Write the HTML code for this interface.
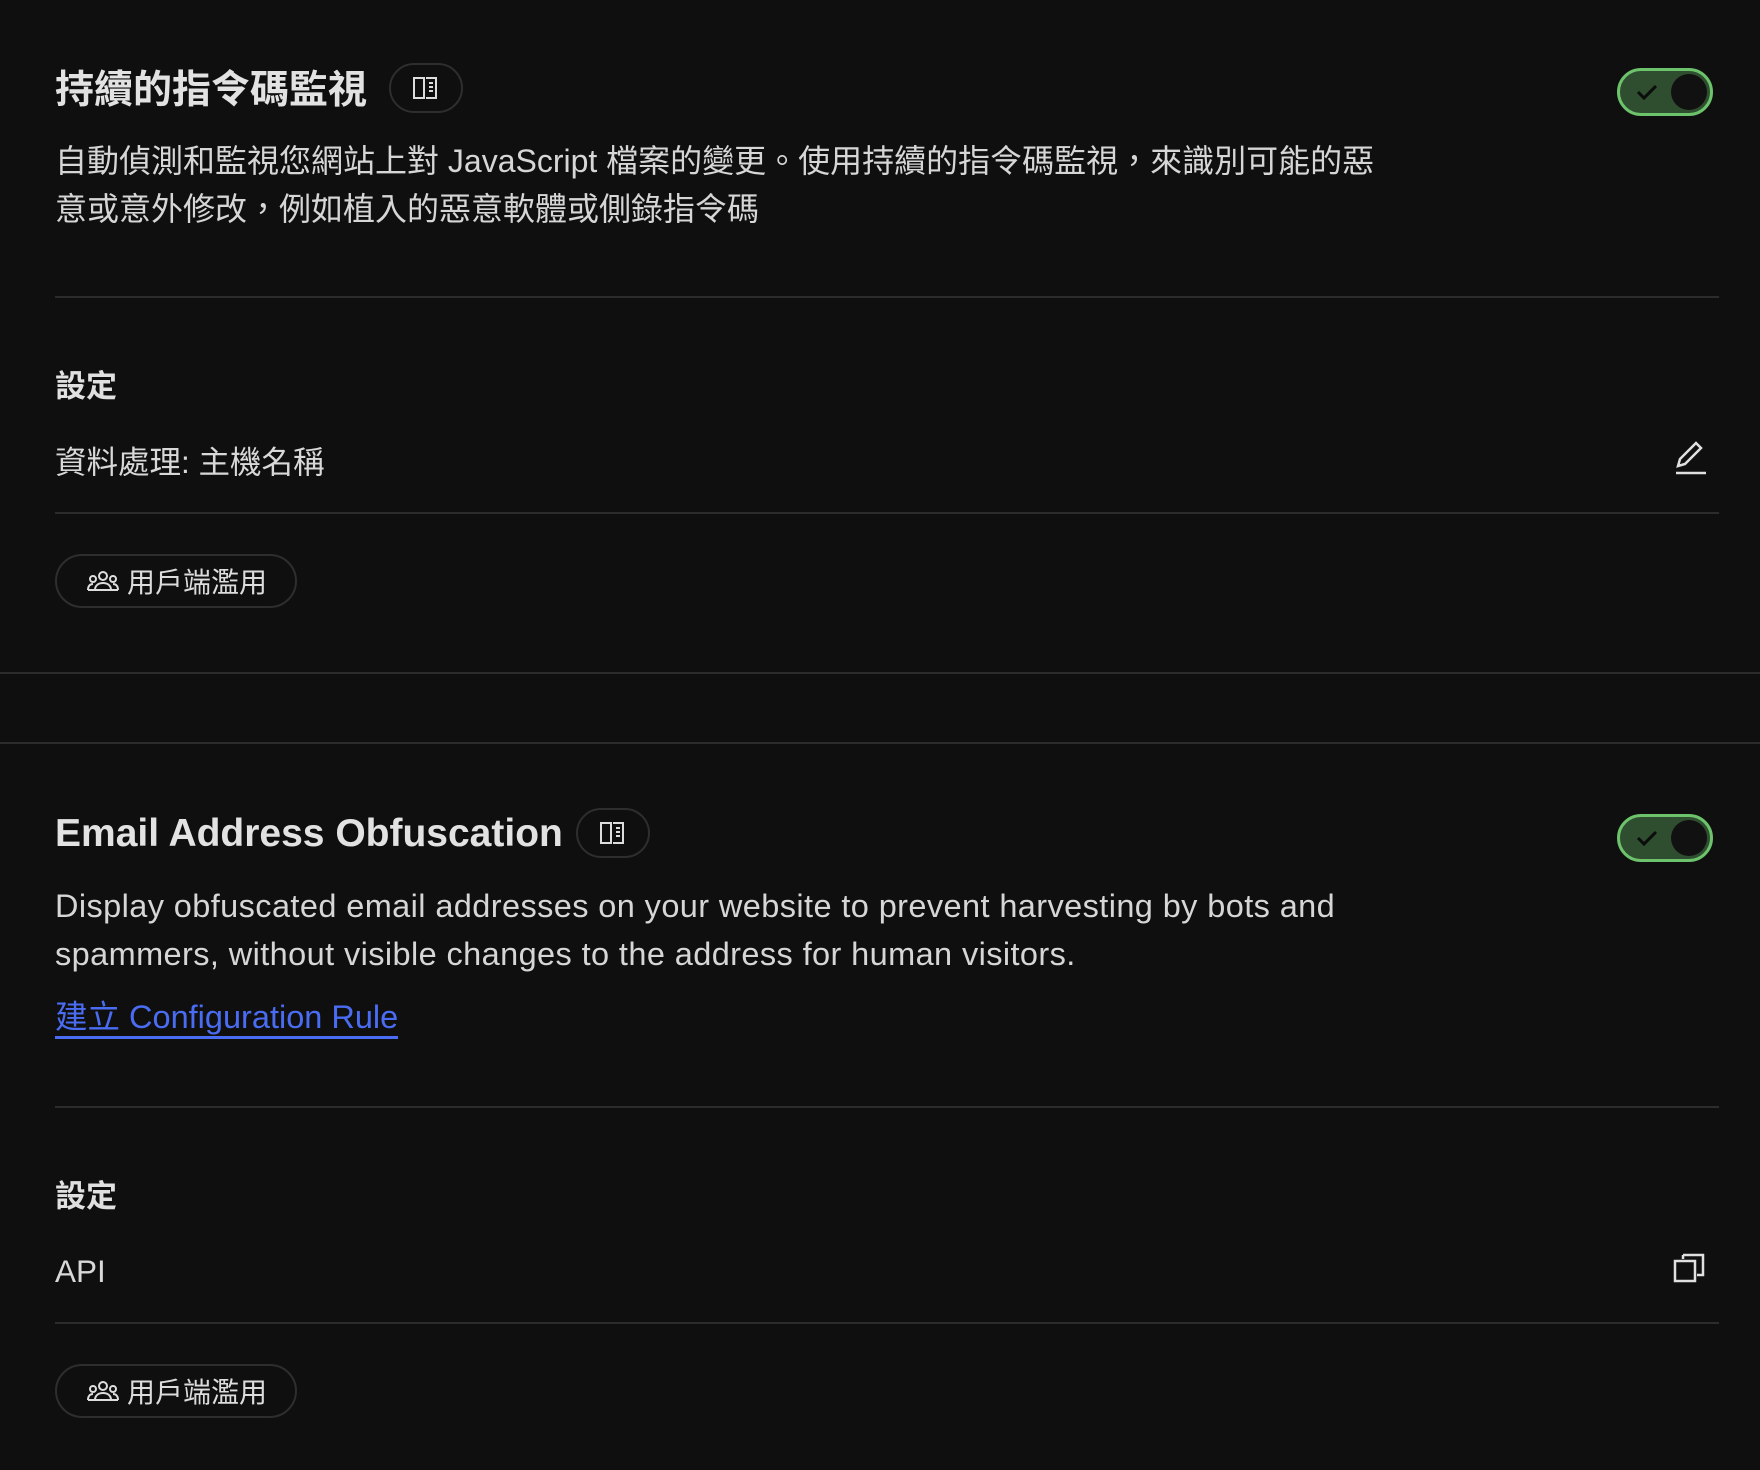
<!DOCTYPE html>
<html><head><meta charset="utf-8"><style>
*{margin:0;padding:0;box-sizing:border-box}
body{width:1760px;height:1470px;background:#0f0f0f;color:#dcdcdc;font-family:"Liberation Sans","Noto Sans CJK TC",sans-serif;position:relative;overflow:hidden}
.a{position:absolute;white-space:nowrap}
.t{font-size:39px;font-weight:bold;color:#e2e2e2}
.d{font-size:32px;line-height:48px;color:#d6d6d6}
.h{font-size:31px;font-weight:bold;color:#e0e0e0}
.r{font-size:31.5px;color:#d8d8d8}
.hr{position:absolute;height:2px;background:#2c2c2c}
.bk{position:absolute;width:74px;height:50px;border:2px solid #2e2e2e;border-radius:25px;display:flex;align-items:center;justify-content:center}
.tg{position:absolute;width:96px;height:48px;border-radius:24px;background:#2f4d2f;border:3px solid #6cc36c}
.tg .k{position:absolute;right:3px;top:3px;width:36px;height:36px;border-radius:50%;background:#111}
.tg svg{position:absolute;left:16px;top:12px}
.pill{position:absolute;width:242px;height:54px;border:2px solid #2e2e2e;border-radius:27px;display:flex;align-items:center;padding-left:30px;font-size:28px;color:#dcdcdc}
.pill svg{margin-right:8px}
</style></head><body>
<div class="a t" style="left:55px;top:59px">持續的指令碼監視</div>
<div class="bk" style="left:389px;top:63px"><svg width="28" height="26" viewBox="0 0 28 26" fill="none" stroke="#ddd" stroke-width="2"><path d="M2 3h10v20H2zM14 3h10v20H14"/><path d="M17 8h4M17 12h4M17 16h4"/></svg></div>
<div class="tg" style="left:1617px;top:68px"><svg width="22" height="18" viewBox="0 0 22 18"><path d="M2 9l6 6 12-12" stroke="#0c0c0c" stroke-width="3" fill="none"/></svg><div class="k"></div></div>
<div class="a d" style="left:55px;top:137px">自動偵測和監視您網站上對 JavaScript 檔案的變更。使用持續的指令碼監視，來識別可能的惡<br>意或意外修改，例如植入的惡意軟體或側錄指令碼</div>
<div class="hr" style="left:55px;width:1664px;top:296px"></div>
<div class="a h" style="left:55px;top:361px">設定</div>
<div class="a r" style="left:55px;top:437px">資料處理: 主機名稱</div>
<svg class="a" style="left:1672px;top:438px" width="36" height="38" viewBox="0 0 36 38" fill="none" stroke="#e0e0e0" stroke-width="2.5"><path d="M24 5l5 5-16 16-7 2 2-7z"/><path d="M4 35h30"/></svg>
<div class="hr" style="left:55px;width:1664px;top:512px"></div>
<div class="pill" style="left:55px;top:554px"><svg width="32" height="22" viewBox="0 0 32 22" fill="none" stroke="#ddd" stroke-width="2"><circle cx="16" cy="6" r="4"/><circle cx="6" cy="9" r="3"/><circle cx="26" cy="9" r="3"/><path d="M8 20c0-5 4-7 8-7s8 2 8 7zM1 20c0-4 2-6 5-6M31 20c0-4-2-6-5-6M1 20h30"/></svg>用戶端濫用</div>
<div class="hr" style="left:0;width:1760px;top:672px"></div>
<div class="hr" style="left:0;width:1760px;top:742px"></div>
<div class="a t" style="left:55px;top:812px">Email Address Obfuscation</div>
<div class="bk" style="left:576px;top:808px"><svg width="28" height="26" viewBox="0 0 28 26" fill="none" stroke="#ddd" stroke-width="2"><path d="M2 3h10v20H2zM14 3h10v20H14"/><path d="M17 8h4M17 12h4M17 16h4"/></svg></div>
<div class="tg" style="left:1617px;top:814px"><svg width="22" height="18" viewBox="0 0 22 18"><path d="M2 9l6 6 12-12" stroke="#0c0c0c" stroke-width="3" fill="none"/></svg><div class="k"></div></div>
<div class="a d" style="left:55px;top:882px;font-size:32.5px;letter-spacing:0.4px">Display obfuscated email addresses on your website to prevent harvesting by bots and<br>spammers, without visible changes to the address for human visitors.</div>
<div class="a" style="left:55px;top:998px;font-size:32.5px;color:#4a6cf2;border-bottom:3px solid #4a6cf2;line-height:38px">建立 Configuration Rule</div>
<div class="hr" style="left:55px;width:1664px;top:1106px"></div>
<div class="a h" style="left:55px;top:1171px">設定</div>
<div class="a r" style="left:55px;top:1253px">API</div>
<svg class="a" style="left:1672px;top:1250px" width="36" height="36" viewBox="0 0 36 36" fill="none" stroke="#e0e0e0" stroke-width="2.5"><rect x="3" y="11" width="20" height="20"/><path d="M11 5h20v20h-6"/><path d="M11 5v4"/></svg>
<div class="hr" style="left:55px;width:1664px;top:1322px"></div>
<div class="pill" style="left:55px;top:1364px"><svg width="32" height="22" viewBox="0 0 32 22" fill="none" stroke="#ddd" stroke-width="2"><circle cx="16" cy="6" r="4"/><circle cx="6" cy="9" r="3"/><circle cx="26" cy="9" r="3"/><path d="M8 20c0-5 4-7 8-7s8 2 8 7zM1 20c0-4 2-6 5-6M31 20c0-4-2-6-5-6M1 20h30"/></svg>用戶端濫用</div>
</body></html>
